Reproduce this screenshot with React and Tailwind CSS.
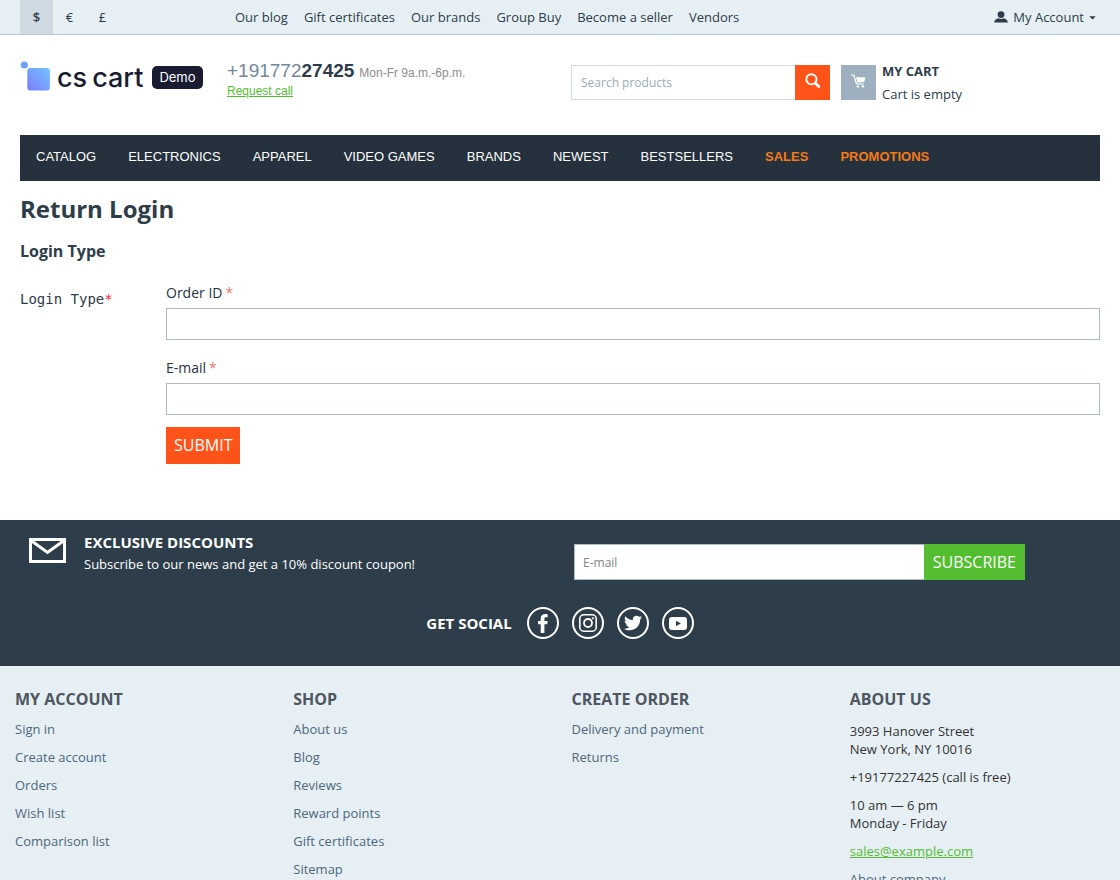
import React, { useState } from 'react';
import { FaTwitter } from 'react-icons/fa';

const currencies = ['$', '€', '£'];

const topLinks = ['Our blog', 'Gift certificates', 'Our brands', 'Group Buy', 'Become a seller', 'Vendors'];

const menu = [
    { title: 'CATALOG' },
    { title: 'ELECTRONICS' },
    { title: 'APPAREL' },
    { title: 'VIDEO GAMES' },
    { title: 'BRANDS' },
    { title: 'NEWEST' },
    { title: 'BESTSELLERS' },
    { title: 'SALES', hot: true },
    { title: 'PROMOTIONS', hot: true },
];

const footerColumns = [
    { title: 'MY ACCOUNT', links: ['Sign in', 'Create account', 'Orders', 'Wish list', 'Comparison list'] },
    { title: 'SHOP', links: ['About us', 'Blog', 'Reviews', 'Reward points', 'Gift certificates', 'Sitemap'] },
    { title: 'CREATE ORDER', links: ['Delivery and payment', 'Returns'] },
];

const UserIcon = () => (
    <svg width="14" height="14" viewBox="0 0 14 14" fill="currentColor" aria-hidden="true">
        <circle cx="7" cy="3.600" r="3.400" />
        <path d="M.2 11.600c0-2.600 1.700-3.600 4.600-4.300.7.4 1.400.6 2.200.6s1.500-.2 2.200-.6c2.900.7 4.600 1.700 4.600 4.300z" />
    </svg>
);

const SearchIcon = () => (
    <svg width="16" height="16" viewBox="0 0 16 16" fill="none" stroke="currentColor" className="mb-1" aria-hidden="true">
        <circle cx="6.400" cy="6.300" r="5.100" strokeWidth="1.900" />
        <path d="M10.600 10.400l3.200 3.100" strokeWidth="2.800" strokeLinecap="round" />
    </svg>
);

const CartIcon = () => (
    <svg width="15" height="14" viewBox="0 0 15 14" fill="currentColor" aria-hidden="true">
        <path d="M.4.600h2.400c.4 0 .6.2.7.500l2.500 8.300h6.800v1.100H5.500c-.4 0-.6-.2-.7-.5L2.400 1.700h-2z" />
        <path d="M5 3.200h9.300l-1 4.900-6.800.6z" />
        <circle cx="6.900" cy="12.400" r="1.200" />
        <circle cx="11.900" cy="12.400" r="1.200" />
    </svg>
);

const MailIcon = () => (
    <svg width="37" height="25" viewBox="0 0 37 25" fill="none" stroke="white" strokeWidth="3" aria-hidden="true">
        <rect x="1.500" y="1.500" width="34" height="22" />
        <path d="M2 2.500l16.500 12L35 2.500" />
    </svg>
);

const FacebookIcon = () => (
    <svg width="10" height="19" viewBox="0 0 10 19" fill="currentColor" aria-hidden="true">
        <path d="M6.400 19v-8.700h2.800l.4-3.400H6.400V4.900c0-1 .4-1.600 1.600-1.600h1.700V.2C9.300.1 8.300 0 7.300 0 4.500 0 2.700 1.600 2.700 4.400v2.500H0v3.400h2.700V19z" />
    </svg>
);

const InstagramIcon = () => (
    <svg width="18" height="18" viewBox="0 0 18 18" fill="none" stroke="currentColor" aria-hidden="true">
        <rect x="0.800" y="0.800" width="16.400" height="16.400" rx="4" strokeWidth="1.600" />
        <circle cx="9" cy="9" r="4" strokeWidth="1.800" />
        <circle cx="13.800" cy="4.300" r="1.100" fill="currentColor" stroke="none" />
    </svg>
);

const YoutubeIcon = () => (
    <svg width="18" height="13" viewBox="0 0 18 13" aria-hidden="true">
        <rect width="18" height="13" rx="3" fill="currentColor" />
        <path d="M7 3.800v5.400l4.800-2.700z" fill="#2d3d49" />
    </svg>
);

const socials = [
    { name: 'Facebook', icon: <FacebookIcon /> },
    { name: 'Instagram', icon: <InstagramIcon /> },
    { name: 'Twitter', icon: <FaTwitter size={18} /> },
    { name: 'YouTube', icon: <YoutubeIcon /> },
];

const Logo = () => (
    <a href="#" className="flex items-start font-['Inter',sans-serif] text-[#1a1c31]">
        <svg width="30" height="30" viewBox="0 0 30 30" className="shrink-0" aria-hidden="true">
            <defs>
                <linearGradient id="logoFill" x1="0" y1="1" x2="1" y2="0">
                    <stop offset="0" stopColor="#7a7cff" />
                    <stop offset="1" stopColor="#74c4ff" />
                </linearGradient>
            </defs>
            <circle cx="4.300" cy="4" r="3.600" fill="#6f9ff5" />
            <rect x="7.300" y="7" width="22.600" height="22.600" rx="3" fill="url(#logoFill)" />
        </svg>
        <span className="ml-[7px] flex gap-[5px] text-[27px] leading-[34px] font-medium">
            <span>cs</span>
            <span>cart</span>
        </span>
        <span className="mt-[5px] ml-[9px] rounded-[5px] bg-[#1a1c31] px-[7px] text-[13px] leading-[23px] text-white">Demo</span>
    </a>
);

const TopBar = () => {
    const [currency, setCurrency] = useState('$');

    return (
        <div className="border-b border-[#b4c9d8] bg-[#e6eff4] px-5">
            <div className="grid grid-cols-[207fr_873fr]">
                <div className="flex">
                    {currencies.map(item => (
                        <button
                            key={item}
                            type="button"
                            onClick={() => setCurrency(item)}
                            className={item === currency ? 'h-[34px] w-[33px] bg-[#cfd9e2] pt-px font-semibold' : 'h-[34px] w-[33px] pt-px'}
                        >
                            {item}
                        </button>
                    ))}
                </div>
                <div className="flex items-center justify-between pt-px pr-1 pl-2">
                    <nav className="flex gap-4">
                        {topLinks.map(link => (
                            <a key={link} href="#">{link}</a>
                        ))}
                    </nav>
                    <button type="button" className="flex items-center gap-[5px]">
                        <UserIcon />
                        My Account
                        <svg width="7" height="4" viewBox="0 0 7 4" fill="currentColor" aria-hidden="true">
                            <path d="M0.300 0.300h6.400L3.500 3.500z" />
                        </svg>
                    </button>
                </div>
            </div>
        </div>
    );
};

const Header = () => (
    <header className="grid grid-cols-[207fr_344fr_270fr_259fr] items-start px-5 pt-6 pb-7">
        <div className="mt-0.5">
            <Logo />
        </div>

        <div className="mt-0.5 font-['Liberation_Sans',sans-serif] text-xs">
            <div className="leading-5 text-[#8c8c8c]">
                <span className="text-[19px] text-[#72899c]">+191772</span>
                <span className="mr-[5px] text-[19px] font-bold text-[#2d3d49]">27425</span>
                Mon-Fr 9a.m.-6p.m.
            </div>
            <a href="#" className="block leading-4 text-[#53be30] underline">Request call</a>
        </div>

        <form className="mt-1.5 mr-[11px] flex" onSubmit={e => e.preventDefault()}>
            <input
                type="text"
                aria-label="Search products"
                placeholder="Search products"
                className="h-[35px] min-w-0 flex-1 border border-r-0 border-[#d5dce4] bg-white px-[9px] text-xs outline-none placeholder:text-[#9aabbb]"
            />
            <button type="submit" aria-label="Search" className="flex size-[35px] items-center justify-center bg-[#ff5319] text-white">
                <SearchIcon />
            </button>
        </form>

        <a href="#" className="flex items-start gap-1.5">
            <span className="mt-1.5 flex size-[35px] items-center justify-center bg-[#9eb0c0] pb-1 text-white">
                <CartIcon />
            </span>
            <span className="pt-px pb-px leading-[23px]">
                <span className="block font-bold">MY CART</span>
                <span className="block">Cart is empty</span>
            </span>
        </a>
    </header>
);

const MainMenu = () => (
    <nav className="mx-5 flex gap-8 bg-[#25313d] px-4 pt-3 pb-3.5 font-['Liberation_Sans',sans-serif] leading-5 text-white">
        {menu.map(item => (
            <a key={item.title} href="#" className={item.hot ? 'font-bold text-[#f47a13]' : ''}>
                {item.title}
            </a>
        ))}
    </nav>
);

const Field = ({ id, label, type }) => (
    <div>
        <label htmlFor={id} className="mb-[5px] flex gap-[3px] text-sm leading-5 text-[#25313d]">
            {label}
            <span className="text-[#ea7a70]">*</span>
        </label>
        <input id={id} type={type} className="h-8 w-full border border-[#adbbc6] bg-white px-2 outline-none" />
    </div>
);

const ReturnLogin = () => (
    <main className="px-5 pt-3 pb-14">
        <h1 className="text-2xl leading-8 font-bold">Return Login</h1>
        <h2 className="mt-3.5 text-base leading-6 font-bold">Login Type</h2>

        <form className="mt-5 flex" onSubmit={e => e.preventDefault()}>
            <div className="w-[146px] shrink-0 pt-1.5 font-['DejaVu_Sans_Mono',monospace] text-sm leading-5">
                Login Type<span className="text-[#ee2b2b]">*</span>
            </div>
            <div className="flex-1">
                <div className="space-y-[18px]">
                    <Field id="order_id" label="Order ID" type="text" />
                    <Field id="order_email" label="E-mail" type="email" />
                </div>
                <button type="submit" className="mt-3 block h-[37px] bg-[#ff5319] px-2 pb-0.5 text-base text-white">
                    SUBMIT
                </button>
            </div>
        </form>
    </main>
);

const Subscribe = () => (
    <section className="bg-[#2d3d49] pt-3 pb-[27px] text-white">
        <div className="grid grid-cols-2">
            <div className="flex pl-[29px]">
                <div className="mt-1.5 w-[55px] shrink-0">
                    <MailIcon />
                </div>
                <div>
                    <h3 className="text-[15px] leading-[21px] font-bold">EXCLUSIVE DISCOUNTS</h3>
                    <p className="leading-[22px]">Subscribe to our news and get a 10% discount coupon!</p>
                </div>
            </div>
            <form className="mt-3 flex pr-[95px] pl-3.5" onSubmit={e => e.preventDefault()}>
                <input
                    type="email"
                    aria-label="E-mail"
                    placeholder="E-mail"
                    className="h-9 min-w-0 flex-1 border border-r-0 border-[#adbbc6] bg-white px-2 text-xs text-[#25313d] outline-none placeholder:text-[#858585]"
                />
                <button type="submit" className="h-9 bg-[#53be30] px-[9px] text-base text-white">
                    SUBSCRIBE
                </button>
            </form>
        </div>

        <div className="mt-[27px] flex items-center justify-center">
            <span className="mr-[15px] text-[15px] font-bold">GET SOCIAL</span>
            <div className="flex gap-[13px]">
                {socials.map(social => (
                    <a
                        key={social.name}
                        href="#"
                        aria-label={social.name}
                        className="flex size-8 items-center justify-center rounded-full border-2 border-white"
                    >
                        {social.icon}
                    </a>
                ))}
            </div>
        </div>
    </section>
);

const Footer = () => (
    <footer className="grid grid-cols-4 gap-[23px] bg-[#e6eff4] px-[15px] pt-[21px] pb-10 leading-[18px]">
        {footerColumns.map(column => (
            <div key={column.title}>
                <h3 className="text-base leading-6 font-bold text-[#4d5661]">{column.title}</h3>
                <ul className="mt-[9px] space-y-2.5 text-[#4d687c]">
                    {column.links.map(link => (
                        <li key={link}><a href="#">{link}</a></li>
                    ))}
                </ul>
            </div>
        ))}

        {/* Contacts */}
        <div>
            <h3 className="text-base leading-6 font-bold text-[#4d5661]">ABOUT US</h3>
            <div className="mt-[11px] space-y-2.5 text-[#333333]">
                <p>3993 Hanover Street<br />New York, NY 10016</p>
                <p>+19177227425 (call is free)</p>
                <p>10 am — 6 pm<br />Monday - Friday</p>
                <p><a href="#" className="text-[#53be30] underline">sales@example.com</a></p>
                <p><a href="#" className="text-[#4d687c]">About company</a></p>
            </div>
        </div>
    </footer>
);

const App = () => (
    <div className="bg-white font-['Open_Sans',sans-serif] text-[13px] text-[#2d3d49]">
        <TopBar />
        <Header />
        <MainMenu />
        <ReturnLogin />
        <Subscribe />
        <Footer />
    </div>
);

export default App;
